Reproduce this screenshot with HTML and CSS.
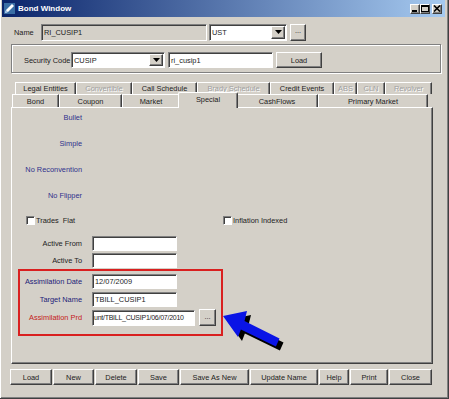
FILE: index.html
```html
<!DOCTYPE html>
<html lang="en">
<head>
    <meta charset="UTF-8">
    <title>Bond Window</title>
    <link rel="stylesheet" href="styles.css">
</head>
<body>

    <div class="window">
        <div class="titlebar">
            <svg class="app-icon" width="11" height="11" viewBox="0 0 11 11">
                <rect width="11" height="11" fill="#3a6ea5"/>
                <polygon points="1,10 2,7 8,1 10,3 4,9" fill="#ffffff"/>
                <polygon points="1,10 2,7 4,9" fill="#9cc0e8"/>
            </svg>
            <span class="title">Bond Window</span>
            <div class="title-buttons">
                <span class="tbtn"><svg width="8" height="7" viewBox="0 0 8 7"><rect x="1" y="5" width="5" height="2" fill="#000"/></svg></span>
                <span class="tbtn"><svg width="8" height="7" viewBox="0 0 8 7"><rect x="0.5" y="0.5" width="7" height="6" fill="none" stroke="#000"/><rect x="0" y="0" width="8" height="2" fill="#000"/></svg></span>
                <span class="tbtn close"><svg width="8" height="7" viewBox="0 0 8 7"><path d="M1 0.5 L7 6.5 M7 0.5 L1 6.5" stroke="#000" stroke-width="1.6"/></svg></span>
            </div>
        </div>

        <div class="content">
            <div class="name-row">
                <span class="name-lbl">Name</span>
                <div class="field readonly name-field">RI_CUSIP1</div>
                <div class="field combo ust-combo">UST<span class="drop"><svg width="7" height="4" viewBox="0 0 7 4"><polygon points="0,0 7,0 3.5,4" fill="#000"/></svg></span></div>
                <div class="button dots">...</div>
            </div>

            <div class="groupbox">
                <div class="security-row">
                    <span class="sec-lbl">Security Code</span>
                    <div class="field combo sec-combo">CUSIP<span class="drop"><svg width="7" height="4" viewBox="0 0 7 4"><polygon points="0,0 7,0 3.5,4" fill="#000"/></svg></span></div>
                    <div class="field sec-field">ri_cusip1</div>
                    <div class="button load-btn">Load</div>
                </div>
            </div>

            <div class="tab-row back">
                <span class="tab w61">Legal Entities</span>
                <span class="tab w56 disabled">Convertible</span>
                <span class="tab w65">Call Schedule</span>
                <span class="tab w73 disabled">Brady Schedule</span>
                <span class="tab w64">Credit Events</span>
                <span class="tab w23 disabled">ABS</span>
                <span class="tab w28 disabled">CLN</span>
                <span class="tab w47 disabled">Revolver</span>
            </div>
            <div class="tab-row front">
                <span class="tab w47">Bond</span>
                <span class="tab w63">Coupon</span>
                <span class="tab w58">Market</span>
                <span class="tab w60 selected">Special</span>
                <span class="tab w82">CashFlows</span>
                <span class="tab w110">Primary Market</span>
            </div>

            <div class="panel">
                <div class="info-list">
                    <div class="row"><span class="lbl info">Bullet</span></div>
                    <div class="row"><span class="lbl info">Simple</span></div>
                    <div class="row"><span class="lbl info">No Reconvention</span></div>
                    <div class="row"><span class="lbl info">No Flipper</span></div>
                </div>

                <div class="check-row">
                    <label class="check trades"><span class="box"></span>Trades&nbsp; Flat</label>
                    <label class="check"><span class="box"></span>Inflation Indexed</label>
                </div>

                <div class="row field-row active-from">
                    <span class="lbl">Active From</span>
                    <div class="field w85"></div>
                </div>
                <div class="row field-row active-to">
                    <span class="lbl">Active To</span>
                    <div class="field w85"></div>
                </div>

                <div class="highlight">
                    <div class="row field-row">
                        <span class="lbl navy">Assimilation Date</span>
                        <div class="field w85">12/07/2009</div>
                    </div>
                    <div class="row field-row target">
                        <span class="lbl navy">Target Name</span>
                        <div class="field w85">TBILL_CUSIP1</div>
                    </div>
                    <div class="row field-row prd">
                        <span class="lbl red">Assimilation Prd</span>
                        <div class="prd-inputs">
                            <div class="field w103 prd-field">unt/TBILL_CUSIP1/06/07/2010</div>
                            <div class="button prd-btn">...</div>
                        </div>
                    </div>
                </div>
            </div>

            <div class="button-bar">
                <div class="button w42">Load</div>
                <div class="button w41">New</div>
                <div class="button w42">Delete</div>
                <div class="button w41">Save</div>
                <div class="button w69">Save As New</div>
                <div class="button w68">Update Name</div>
                <div class="button w30">Help</div>
                <div class="button w38">Print</div>
                <div class="button w43">Close</div>
            </div>
        </div>

        <svg class="arrow" width="75" height="55" viewBox="0 0 75 55">
            <polygon transform="translate(4,4)" points="8,16 32,11 29.5,21 64.5,38.4 60.9,46.6 25.9,29.4 23,37" fill="#000"/>
            <polygon points="8,16 32,11 29.5,21 64.5,38.4 60.9,46.6 25.9,29.4 23,37" fill="#0a14e6"/>
        </svg>
    </div>

</body>
</html>
```

FILE: styles.css
```css
* {
    box-sizing: border-box;
}
body {
    margin: 0;
    background-color: #d4d0c8;
    font-family: "Liberation Sans", Arial, sans-serif;
    font-size: 7.4px;
    color: #1c1c1c;
}
.window {
    position: relative;
    width: 449px;
    height: 399px;
    padding: 0 3px 0 2px;
    border-right: 1px solid #404040;
    border-bottom: 1px solid #404040;
    box-shadow: inset 1px 0 #fff, inset -1px -1px #808080;
}

/* title bar */
.titlebar {
    height: 17px;
    display: flex;
    align-items: center;
    padding: 0 3px 0 2px;
    background: linear-gradient(to right, #0a246a, #a6caf0);
}
.app-icon {
    display: block;
}
.title {
    color: #fff;
    font-weight: bold;
    font-size: 8px;
    margin-left: 3px;
}
.title-buttons {
    margin-left: auto;
    display: flex;
}
.tbtn {
    width: 10px;
    height: 10px;
    display: flex;
    align-items: center;
    justify-content: center;
    background-color: #d4d0c8;
    border: 1px solid;
    border-color: #fff #404040 #404040 #fff;
    box-shadow: inset -1px -1px #808080;
}
.tbtn.close {
    margin-left: 2px;
}

/* shared controls */
.field {
    height: 15px;
    display: flex;
    align-items: center;
    padding: 0 2px;
    background-color: #fff;
    border: 1px solid;
    border-color: #808080 #fff #fff #808080;
    box-shadow: inset 1px 1px #404040;
    white-space: nowrap;
    overflow: hidden;
}
.field.readonly {
    background-color: #d4d0c8;
}
.combo {
    position: relative;
    padding-right: 16px;
}
.drop {
    position: absolute;
    right: 1px;
    top: 1px;
    bottom: 1px;
    width: 14px;
    display: flex;
    align-items: center;
    justify-content: center;
    background-color: #d4d0c8;
    border: 1px solid;
    border-color: #fff #404040 #404040 #fff;
    box-shadow: inset -1px -1px #808080;
}
.button {
    height: 16px;
    display: flex;
    align-items: center;
    justify-content: center;
    background-color: #d4d0c8;
    border: 1px solid;
    border-color: #fff #404040 #404040 #fff;
    box-shadow: inset -1px -1px #808080;
    white-space: nowrap;
}

/* header rows */
.content {
    padding: 6px 0 0 9px;
}
.name-row {
    display: flex;
    align-items: center;
    height: 18px;
    padding-left: 3px;
}
.name-lbl {
    width: 27px;
}
.name-field {
    width: 166px;
    height: 17px;
}
.ust-combo {
    width: 78px;
    height: 17px;
    margin-left: 2px;
}
.dots {
    width: 16px;
    height: 17px;
    margin-left: 3px;
    padding-bottom: 3px;
}
.groupbox {
    width: 430px;
    height: 29px;
    margin-top: 3px;
    padding: 7px 0 0 12px;
    border: 1px solid #808080;
    box-shadow: inset 1px 1px #fff, 1px 1px #fff;
}
.security-row {
    display: flex;
    align-items: center;
    height: 16px;
}
.sec-lbl {
    width: 47px;
}
.sec-combo {
    width: 94px;
    height: 16px;
}
.sec-field {
    width: 105px;
    height: 16px;
    margin-left: 3px;
}
.load-btn {
    width: 46px;
    margin-left: 3px;
}

/* tabs */
.tab-row {
    display: flex;
}
.tab-row.back {
    height: 12px;
    margin: 9px 0 0 4px;
}
.tab-row.front {
    height: 13px;
    margin-left: 1px;
}
.tab {
    display: flex;
    align-items: center;
    justify-content: center;
    border-top: 1px solid #fff;
    border-left: 1px solid #fff;
    border-right: 1px solid #404040;
    box-shadow: inset -1px 0 #808080;
    white-space: nowrap;
}
.tab.disabled {
    color: #a0a0a0;
    text-shadow: 1px 1px #fff;
}
.tab.selected {
    position: relative;
    z-index: 1;
    margin: -2px -2px -1px;
    padding: 0 2px 2px;
    background-color: #d4d0c8;
    border-radius: 2px 2px 0 0;
}
.w23 { width: 23px; }
.w28 { width: 28px; }
.w30 { width: 30px; }
.w38 { width: 38px; }
.w41 { width: 41px; }
.w42 { width: 42px; }
.w43 { width: 43px; }
.w47 { width: 47px; }
.w56 { width: 56px; }
.w58 { width: 58px; }
.w60 { width: 60px; }
.w61 { width: 61px; }
.w63 { width: 63px; }
.w64 { width: 64px; }
.w65 { width: 65px; }
.w68 { width: 68px; }
.w69 { width: 69px; }
.w73 { width: 73px; }
.w82 { width: 82px; }
.w85 { width: 85px; }
.w103 { width: 103px; }
.w110 { width: 110px; }

/* tab panel */
.panel {
    width: 422px;
    height: 257px;
    padding: 1px 0 0 8px;
    border: 1px solid;
    border-color: #fff #404040 #404040 #fff;
    box-shadow: inset -1px -1px #808080;
}
.info-list {
    display: flex;
    flex-direction: column;
    gap: 12px;
    padding-top: 1px;
}
.row {
    display: grid;
    grid-template-columns: 62px auto;
    column-gap: 10px;
    align-items: center;
    height: 14px;
}
.lbl {
    text-align: right;
    white-space: nowrap;
}
.lbl.info {
    color: #30308c;
}
.lbl.navy {
    color: #1c1c78;
}
.lbl.red {
    color: #c42020;
}
.check-row {
    display: flex;
    align-items: center;
    height: 14px;
    margin-top: 11px;
    padding-left: 6px;
}
.check {
    display: flex;
    align-items: center;
}
.check.trades {
    width: 197px;
}
.box {
    width: 9px;
    height: 9px;
    margin-right: 1px;
    background-color: #fff;
    border: 1px solid;
    border-color: #808080 #fff #fff #808080;
    box-shadow: inset 1px 1px #404040;
}
.field-row {
    height: 15px;
}
.active-from {
    margin-top: 9px;
}
.active-to {
    margin-top: 2px;
}
.highlight {
    width: 205px;
    margin: 1px 0 0 -2px;
    padding: 3px 0 8px;
    border: 2px solid #d92020;
}
.target {
    margin-top: 3px;
}
.prd {
    height: 17px;
    margin-top: 2px;
}
.prd-inputs {
    display: flex;
    align-items: center;
}
.prd-field {
    height: 16px;
    padding: 0 1px;
    font-size: 7px;
    letter-spacing: -0.25px;
}
.prd-btn {
    width: 17px;
    height: 17px;
    margin-left: 4px;
    padding-bottom: 3px;
}

/* bottom buttons */
.button-bar {
    display: flex;
    gap: 1px;
    margin: 5px 0 0 -1px;
}

.arrow {
    position: absolute;
    left: 215px;
    top: 300px;
}
```
